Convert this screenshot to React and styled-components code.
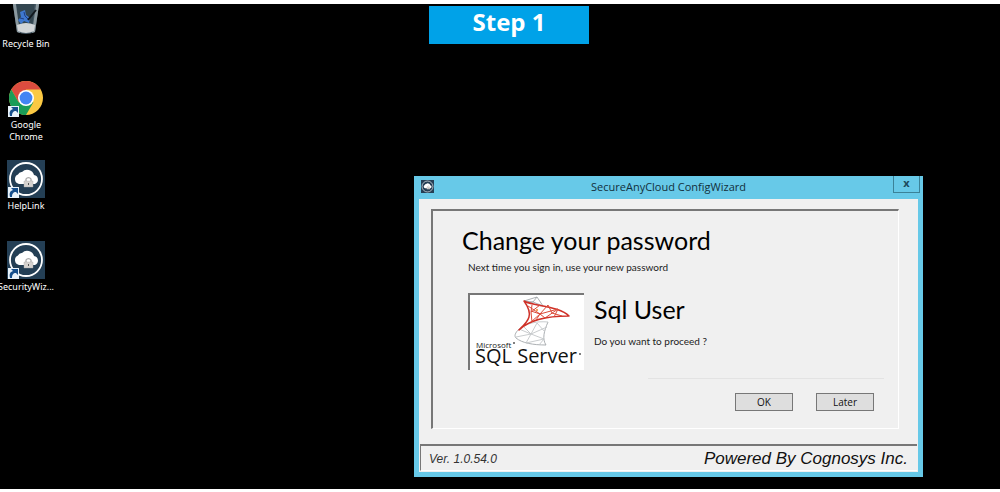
import React from 'react';
import styled, {createGlobalStyle} from 'styled-components';

const GlobalStyle = createGlobalStyle`
	* {
		box-sizing: border-box;
	}

	body {
		margin: 0;
		background: #fff;
		font-family: 'Open Sans', 'Noto Sans', sans-serif;
	}
`;

const Page = styled.div`
	display: flex;
	min-height: 100vh;
	padding: 4px 0 3px;
`;

const Desktop = styled.main`
	position: relative;
	flex: 1;
	overflow: hidden;
	background: #000;
`;

const Shortcuts = styled.nav`
	position: absolute;
	top: -6px;
	left: -4px;
	display: flex;
	flex-direction: column;
	gap: 17px;
	width: 60px;
`;

const Shortcut = styled.a`
	display: flex;
	flex-direction: column;
	align-items: center;
	color: #fff;
	font-family: 'Noto Sans', sans-serif;
	font-size: 9px;
	line-height: 12px;
	text-align: center;
	text-decoration: none;

	svg {
		width: 38px;
		height: 38px;
		margin-bottom: 2px;
	}

	span {
		min-height: 24px;
	}
`;

const Step = styled.h1`
	position: absolute;
	top: 2px;
	left: 429px;
	width: 160px;
	margin: 0;
	padding-bottom: 6px;
	background: #00a2e8;
	color: #fff;
	font-size: 24px;
	line-height: 32px;
	text-align: center;
`;

const Window = styled.section`
	position: absolute;
	top: 172px;
	left: 414px;
	width: 509px;
	padding: 0 5px 5px;
	background: #67c9e8;
`;

const TitleBar = styled.header`
	display: flex;
	justify-content: space-between;
	height: 23px;
	margin-right: -2px;

	svg {
		width: 13px;
		height: 13px;
		margin: 4px 10px 0 2px;
	}

	h2 {
		margin: 0;
		color: #12303c;
		font-size: 11px;
		font-weight: 400;
		line-height: 22px;
	}
`;

const Close = styled.button`
	width: 27px;
	height: 17px;
	padding: 0 0 2px;
	background: none;
	border: 1px solid #3b8298;
	border-top: none;
	color: #1c4a5c;
	font: 700 11px/14px 'Open Sans', sans-serif;
`;

const Client = styled.div`
	background: #f0f0f0;
	padding: 10px 1px 1px;
`;

const Panel = styled.div`
	margin: 0 18px 15px 11px;
	padding: 13px 14px 17px 29px;
	border: 1px solid #fff;
	border-top: 2px solid #777;
	border-left: 2px solid #777;
`;

const Heading = styled.h3`
	margin: 0;
	color: #000;
	font-family: Lato, 'Open Sans', sans-serif;
	font-size: 25px;
	font-weight: 400;
	line-height: 32px;
`;

const Note = styled.p`
	margin: 0;
	color: #222;
	font-family: Lato, 'Open Sans', sans-serif;
	font-size: 10px;
	line-height: 16px;
`;

const Product = styled.div`
	display: flex;
	gap: 10px;
	margin-bottom: 8px;
	padding: 18px 0 0 6px;
`;

const Intro = styled.div`
	padding-left: 6px;
	padding-top: 3px;
`;

const Details = styled.div`
	display: flex;
	flex-direction: column;
	gap: 8px;
`;

const Logo = styled.div`
	width: 116px;
	height: 77px;
	background: #fff;
	border-top: 2px solid #777;
	border-left: 2px solid #777;

	svg {
		display: block;
		width: 100%;
		height: 100%;
	}
`;

const Divider = styled.hr`
	width: 236px;
	margin: 0 0 14px auto;
	border: 0;
	border-top: 1px solid #e3e3e3;
`;

const Actions = styled.div`
	display: flex;
	justify-content: flex-end;
	gap: 23px;
	padding-right: 10px;
`;

const Action = styled.button`
	width: 58px;
	height: 18px;
	padding: 0;
	background: #dedede;
	border: 1px solid #777;
	color: #111;
	font: 10px/14px 'Open Sans', sans-serif;
`;

const StatusBar = styled.footer`
	display: flex;
	align-items: center;
	justify-content: space-between;
	height: 27px;
	padding: 1px 9px 0 8px;
	border-top: 2px solid #777;
	border-left: 1px solid #777;
	border-bottom: 1px solid #fff;
	color: #111;
	font-family: 'Liberation Sans', Arial, sans-serif;
	font-style: italic;
`;

const Version = styled.span`
	color: #333;
	font-size: 12px;
`;

const Credit = styled.span`
	font-size: 17px;
`;

const ShortcutArrow = () => (
	<g>
		<path d='M1 27h11v11H1z' fill='#e8f2fa' />
		<path d='M3 37c-1-4 0-6 3-7l-2-2h7v6l-2-2c-3 0-4 2-4 5z' fill='#164f8c' />
	</g>
);

const BinIcon = () => (
	<svg viewBox='0 0 38 38' aria-hidden='true'>
		<path d='M5 0h28l-5 34q-9 4-18 0z' fill='#455763' />
		<path d='M9 2h19l-3 28H12z' fill='#334650' />
		<path d='M5 0l5 34 3 1L8 0zM33 0l-5 34-3 1 5-35z' fill='#8b999f' />
		<path d='M10 27q9-4 18 0l-1 6q-8 4-16 0z' fill='#d2d6d8' />
		<path d='M13 14l5-2 1 5 4 3-1 5-5-2-3 3-3-4 3-3z' fill='#3f78cf' />
		<path d='M13 20l4 1M17 14l1 4 3 3' stroke='#1c3c84' fill='none' />
		<path d='M21 22l8-10' stroke='#10171d' strokeWidth='2' />
	</svg>
);

const ChromeIcon = () => (
	<svg viewBox='0 0 38 38' aria-hidden='true'>
		<circle cx='19' cy='19' r='17' fill='#fbc943' />
		<path d='M4.3 10.5A17 17 0 0 1 33.7 10.5H19L11.6 23.2z' fill='#dc4c3f' />
		<path d='M4.3 10.5A17 17 0 0 0 19 36L26.4 23.2H11.6z' fill='#1a9c58' />
		<circle cx='19' cy='19' r='8' fill='#fff' />
		<circle cx='19' cy='19' r='6.4' fill='#4285f4' />
		<ShortcutArrow />
	</svg>
);

const CloudIcon = ({shortcut}) => (
	<svg viewBox='0 0 38 38' aria-hidden='true'>
		<path d='M0 0h38v38H0z' fill='#243f55' />
		<circle cx='19' cy='19' r='16' fill='none' stroke='#fff' strokeWidth='1.8' />
		<path
			d='M12 24a5 5 0 0 1-1-9.500 4 4 0 0 1 4-2.500 7 7 0 0 1 12 3 4.700 4.700 0 0 1 1 9z'
			fill='#fff'
		/>
		<path d='M19 21v-2a3 3 0 0 1 5 0v2' fill='none' stroke='#aaa' strokeWidth='1.3' />
		<path d='M17 21h9v6h-9z' fill='#d6d3d0' stroke='#aaa' strokeWidth='.4' />
		<path d='M21.5 23v2' stroke='#555' />
		{shortcut && <ShortcutArrow />}
	</svg>
);

const SqlServerLogo = () => (
	<svg viewBox='0 0 114 75' role='img' aria-label='Microsoft SQL Server'>
		<g fill='none' strokeLinejoin='round'>
			<path
				d='M57 8L54 6 67 2l6 9M54 6l9 1 4-5M63 7l10 4M57 8l6-1M49 34c-4 4-5 7-3 9 6 5 17 7 30 7-4-6-2-14 2-23'
				stroke='#a2a6a9'
				strokeWidth='.9'
			/>
			<path
				d='M49 34c8-6 18-8 29-7M53 31l8 8-15 3M61 39l16-7M61 39l-5 9M61 39l13 5-18 4M67 28l-6 11M67 28l8 9M61 39l-12-5M74 44l-5 6'
				stroke='#c3c6c8'
				strokeWidth='.9'
			/>
			<path
				d='M54 6c8 5 36 5 45 15-14 0-38 2-50 14 8-8 16-14 5-29z'
				stroke='#cf3128'
				strokeWidth='1.5'
			/>
			<path
				d='M58 11l12 8 8-9M70 19l-9 8M70 19l-9-3M62 10l-1 7M61 17l9-7M70 19l5 4 13-9M70 19l18-5M88 14l-4 8M78 10l4 8 10 3M61 17l1 10M66 25l4-6'
				stroke='#dc4a38'
				strokeWidth='1'
			/>
		</g>
		<circle cx='67' cy='15' r='1' fill='#f08a28' />
		<text x='6' y='53' fontFamily='Open Sans, sans-serif' fontSize='8' fill='#222'>
			Microsoft
		</text>
		<circle cx='44' cy='48' r='1' fill='#555' />
		<text x='5' y='68' fontFamily='Open Sans, sans-serif' fontSize='20' fill='#111'>
			SQL Server
		</text>
		<circle cx='110' cy='59' r='1' fill='#555' />
	</svg>
);

const shortcuts = [
	{label: 'Recycle Bin', icon: <BinIcon />},
	{label: 'Google Chrome', icon: <ChromeIcon />},
	{label: 'HelpLink', icon: <CloudIcon shortcut />},
	{label: 'SecurityWiz...', icon: <CloudIcon shortcut />},
];

const App = () => (
	<Page>
		<GlobalStyle />
		<Desktop>
			<Shortcuts>
				{shortcuts.map(item => (
					<Shortcut key={item.label} href='#'>
						{item.icon}
						<span>{item.label}</span>
					</Shortcut>
				))}
			</Shortcuts>
			<Step>Step 1</Step>
			<Window>
				<TitleBar>
					<CloudIcon />
					<h2>SecureAnyCloud ConfigWizard</h2>
					<Close aria-label='Close'>x</Close>
				</TitleBar>
				<Client>
					<Panel>
						<Heading>Change your password</Heading>
						<Intro>
							<Note>Next time you sign in, use your new password</Note>
						</Intro>
						<Product>
							<Logo>
								<SqlServerLogo />
							</Logo>
							<Details>
								<Heading>Sql User</Heading>
								<Note>Do you want to proceed ?</Note>
							</Details>
						</Product>
						<Divider />
						<Actions>
							<Action>OK</Action>
							<Action>Later</Action>
						</Actions>
					</Panel>
					<StatusBar>
						<Version>Ver. 1.0.54.0</Version>
						<Credit>Powered By Cognosys Inc.</Credit>
					</StatusBar>
				</Client>
			</Window>
		</Desktop>
	</Page>
);

export default App;
